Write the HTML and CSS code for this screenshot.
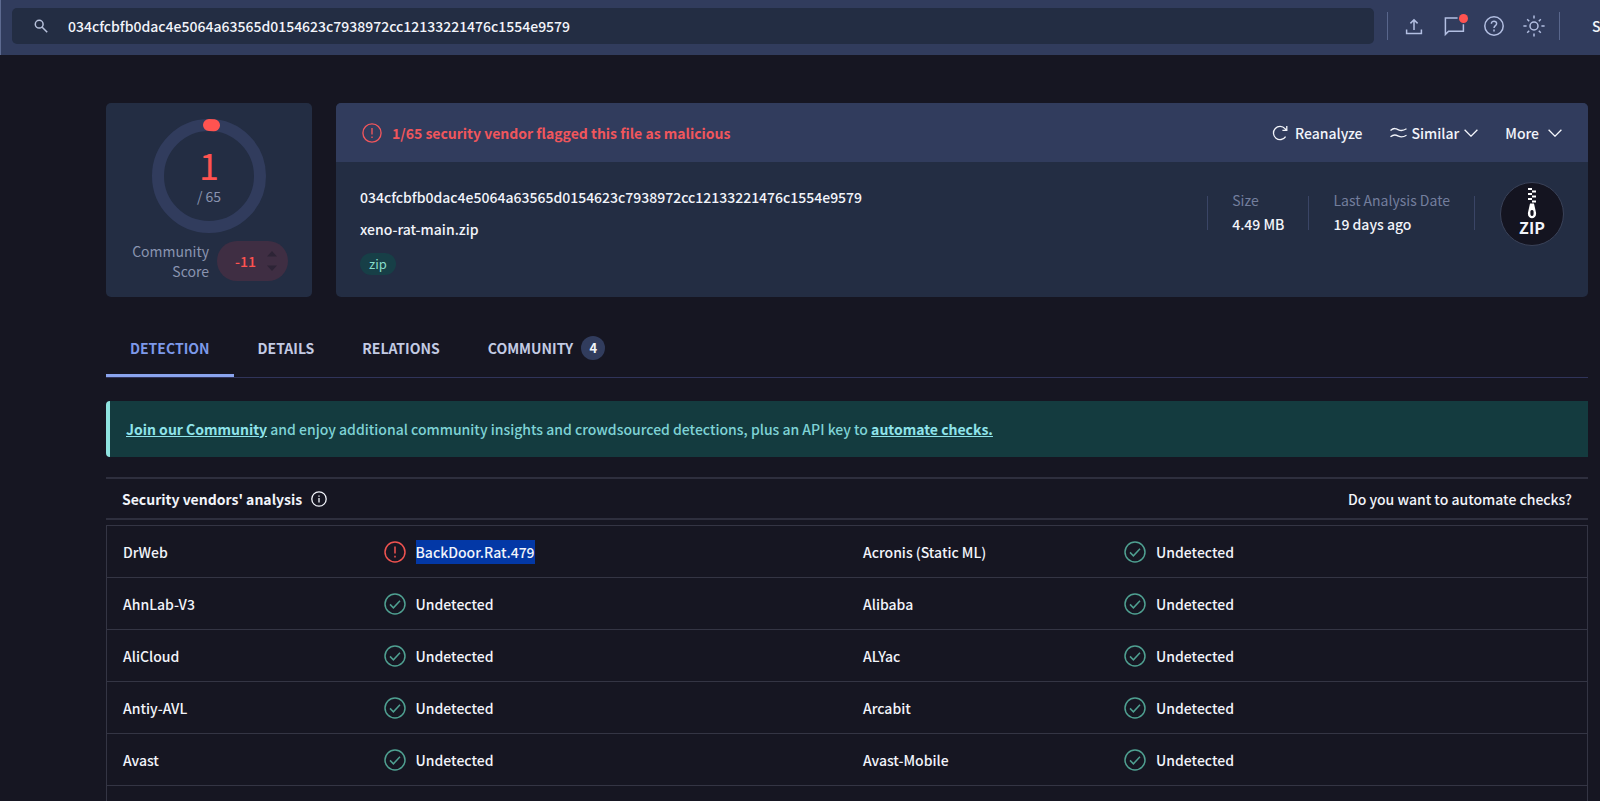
FILE: index.html
```html
<!DOCTYPE html>
<html lang="en">
<head>
  <meta charset="UTF-8">
  <title>xeno-rat-main.zip</title>
  <link rel="stylesheet" href="styles.css">
</head>
<body>

  <!-- icons used more than once -->
  <svg class="sprite" aria-hidden="true">
    <symbol id="icon-check" viewBox="0 0 22 22">
      <circle cx="11" cy="11" r="10"/>
      <path d="M6 11.4l3.4 3.4 6.6-7"/>
    </symbol>
    <symbol id="icon-alert" viewBox="0 0 22 22">
      <circle cx="11" cy="11" r="10"/>
      <path d="M11 5.6v7M11 14.8v1.6"/>
    </symbol>
    <symbol id="icon-chevron" viewBox="0 0 14 8">
      <path d="M.6 .8L7 7.2 13.4 .8"/>
    </symbol>
  </svg>

  <header class="topbar">
    <form class="search">
      <label for="query" aria-label="Search">
        <svg class="icon search-icon" viewBox="0 0 14 14"><circle cx="5.2" cy="5.2" r="3.9"/><path d="M8.2 8.2l5 5"/></svg>
      </label>
      <input type="text" id="query" value="034cfcbfb0dac4e5064a63565d0154623c7938972cc12133221476c1554e9579">
    </form>
    <div class="tools">
      <button type="button" aria-label="Upload">
        <svg class="icon" viewBox="0 0 24 24"><path d="M4.6 15.6v4h14.8v-4M12 16V6M8.4 9.4L12 5.8l3.6 3.6"/></svg>
      </button>
      <button type="button" class="chat" aria-label="Notifications">
        <svg class="icon" viewBox="0 0 24 24"><path d="M15.6 4H3.4v16.4l3.2-3.2h14.8v-7"/></svg>
        <span class="dot"></span>
      </button>
      <button type="button" aria-label="Help">
        <svg class="icon" viewBox="0 0 24 24"><circle cx="12" cy="12" r="9.2"/><path d="M9.4 9.8c0-3.6 5.4-3.4 5.2-.1-.1 1.9-2.6 2-2.6 4.2M12 15.6v1.8"/></svg>
      </button>
      <button type="button" aria-label="Theme">
        <svg class="icon" viewBox="0 0 24 24"><circle cx="12" cy="12" r="4"/><path d="M12 1.4v3.2M12 19.4v3.2M1.4 12h3.2M19.4 12h3.2M5.2 5.2l2 2M16.8 16.8l2 2M5.2 18.8l2-2M16.8 7.2l2-2"/></svg>
      </button>
    </div>
    <a class="signin" href="#">Sign in</a>
  </header>

  <main>
    <section class="summary">
      <div class="score-card">
        <div class="ring">
          <svg class="ring-chart" viewBox="0 0 114 114">
            <circle class="ring-track" cx="57" cy="57" r="51"/>
            <path class="ring-value" d="M57 6a51 51 0 0 1 5 .3"/>
          </svg>
          <div class="ring-text">
            <span class="positives">1</span>
            <span class="total">/ 65</span>
          </div>
        </div>
        <div class="community">
          <span class="community-label">Community Score</span>
          <div class="votes">
            <span>-11</span>
            <svg class="vote-arrows" viewBox="0 0 10 20"><path d="M0 5.5L5 0l5 5.5zM0 14.5L5 20l5-5.5z"/></svg>
          </div>
        </div>
      </div>

      <div class="file-card">
        <div class="file-head">
          <div class="verdict">
            <svg class="icon alert"><use href="#icon-alert"/></svg>
            <span>1/65 security vendor flagged this file as malicious</span>
          </div>
          <div class="actions">
            <button type="button">
              <svg class="icon reload" viewBox="0 0 16 16"><path d="M13.6 11.6A6.6 6.6 0 1 1 13 3.6l1.2 1.6M14.8 1v4.4h-4.4"/></svg>
              Reanalyze
            </button>
            <button type="button" class="similar">
              <svg class="icon waves" viewBox="0 0 17 12"><path d="M.5 3.4C4 .5 6 1.5 8.5 2.8S13 4 16.5 1.8M.5 9.8C4 7 6 8 8.5 9.2s4.5 1.2 8-1"/></svg>
              Similar
              <svg class="icon chevron"><use href="#icon-chevron"/></svg>
            </button>
            <button type="button" class="more">
              More
              <svg class="icon chevron"><use href="#icon-chevron"/></svg>
            </button>
          </div>
        </div>
        <div class="file-body">
          <div class="file-names">
            <div>034cfcbfb0dac4e5064a63565d0154623c7938972cc12133221476c1554e9579</div>
            <div>xeno-rat-main.zip</div>
            <a class="tag" href="#">zip</a>
          </div>
          <div class="facts">
            <div class="fact">
              <span class="muted">Size</span>
              <span>4.49 MB</span>
            </div>
            <div class="fact">
              <span class="muted">Last Analysis Date</span>
              <span>19 days ago</span>
            </div>
            <div class="file-type">
              <svg class="zipper" viewBox="0 0 10 31">
                <path d="M1 0h4v2H1zM5 2.5h4v2H5zM1 5h4v2H1zM5 7.5h4v2H5zM1 10h4v2H1zM5 12.5h4v2H5z"/>
                <path fill-rule="evenodd" d="M3 15.5h4l2 9c1.2 7.5-9.2 7.5-8 0zM5 22c-1.6 0-1.6 1-1.6 3s.2 3 1.6 3 1.6-1 1.6-3 0-3-1.6-3z"/>
              </svg>
              <span>ZIP</span>
            </div>
          </div>
        </div>
      </div>
    </section>

    <nav class="tabs">
      <a class="active" href="#">DETECTION</a>
      <a href="#">DETAILS</a>
      <a href="#">RELATIONS</a>
      <a href="#">COMMUNITY <span class="badge">4</span></a>
    </nav>

    <p class="banner"><a href="#">Join our Community</a> and enjoy additional community insights and crowdsourced detections, plus an API key to <a href="#">automate checks.</a></p>

    <div class="section-head">
      <h2>Security vendors' analysis
        <svg class="icon info" viewBox="0 0 16 16"><circle cx="8" cy="8" r="7.2"/><path d="M8 7v4.6M8 4.4v1.4"/></svg>
      </h2>
      <a href="#">Do you want to automate checks?</a>
    </div>

    <table class="vendors">
      <colgroup>
        <col class="name"><col><col class="name"><col>
      </colgroup>
      <tbody>
        <tr>
          <td>DrWeb</td>
          <td><div class="result bad"><svg class="icon"><use href="#icon-alert"/></svg><mark>BackDoor.Rat.479</mark></div></td>
          <td>Acronis (Static ML)</td>
          <td><div class="result"><svg class="icon"><use href="#icon-check"/></svg>Undetected</div></td>
        </tr>
        <tr>
          <td>AhnLab-V3</td>
          <td><div class="result"><svg class="icon"><use href="#icon-check"/></svg>Undetected</div></td>
          <td>Alibaba</td>
          <td><div class="result"><svg class="icon"><use href="#icon-check"/></svg>Undetected</div></td>
        </tr>
        <tr>
          <td>AliCloud</td>
          <td><div class="result"><svg class="icon"><use href="#icon-check"/></svg>Undetected</div></td>
          <td>ALYac</td>
          <td><div class="result"><svg class="icon"><use href="#icon-check"/></svg>Undetected</div></td>
        </tr>
        <tr>
          <td>Antiy-AVL</td>
          <td><div class="result"><svg class="icon"><use href="#icon-check"/></svg>Undetected</div></td>
          <td>Arcabit</td>
          <td><div class="result"><svg class="icon"><use href="#icon-check"/></svg>Undetected</div></td>
        </tr>
        <tr>
          <td>Avast</td>
          <td><div class="result"><svg class="icon"><use href="#icon-check"/></svg>Undetected</div></td>
          <td>Avast-Mobile</td>
          <td><div class="result"><svg class="icon"><use href="#icon-check"/></svg>Undetected</div></td>
        </tr>
        <tr>
          <td></td>
          <td></td>
          <td></td>
          <td></td>
        </tr>
      </tbody>
    </table>
  </main>

</body>
</html>
```
FILE: styles.css
```css
* {
  box-sizing: border-box;
}

body {
  margin: 0;
  background: #161622;
  color: #f2f4fa;
  font-family: "Noto Sans CJK SC", "Noto Sans", sans-serif;
  font-size: 14px;
  font-weight: 500;
  line-height: 24px;
  overflow-x: hidden;
}

a {
  color: inherit;
  text-decoration: none;
}

button {
  display: flex;
  align-items: center;
  padding: 0;
  border: none;
  background: none;
  color: inherit;
  font: inherit;
  cursor: pointer;
}

.sprite {
  display: none;
}

.icon {
  flex: none;
  fill: none;
  stroke: currentColor;
  stroke-width: 1.5;
}

/* top bar */
.topbar {
  display: flex;
  align-items: center;
  height: 55px;
  padding: 0 0 3px 12px;
  background: #313c5d;
  box-shadow: inset 1px 0 #5d6a90;
  overflow: hidden;
}

.search {
  display: flex;
  align-items: center;
  flex: 1;
  height: 36px;
  padding-left: 22px;
  gap: 20px;
  border-radius: 5px;
  background: #232d43;
}

.search label {
  display: flex;
  color: #b8c2dc;
}

.search-icon {
  width: 14px;
  height: 14px;
}

.search input {
  flex: 1;
  padding: 0;
  border: none;
  outline: none;
  background: none;
  color: inherit;
  font: inherit;
}

.tools {
  display: flex;
  gap: 16px;
  margin-left: 13px;
  padding: 2px 13px 2px 14px;
  border-left: 1px solid #59668c;
  border-right: 1px solid #59668c;
  color: #b3bfe2;
}

.tools .icon {
  width: 24px;
  height: 24px;
}

.chat {
  position: relative;
}

.dot {
  position: absolute;
  top: 0;
  right: -2px;
  width: 9px;
  height: 9px;
  border-radius: 50%;
  background: #ff5350;
}

.signin {
  flex: 0 0 40px;
  min-width: 0;
  padding-left: 32px;
  white-space: nowrap;
}

main {
  padding: 48px 12px 0 106px;
}

/* summary */
.summary {
  display: flex;
  gap: 24px;
}

.score-card {
  display: flex;
  flex-direction: column;
  align-items: center;
  flex: 0 0 206px;
  height: 194px;
  padding-top: 16px;
  border-radius: 5px;
  background: #232d43;
}

.ring {
  display: grid;
  place-items: center;
  width: 114px;
  height: 114px;
}

.ring-chart,
.ring-text {
  grid-area: 1 / 1;
}

.ring-chart {
  width: 114px;
  height: 114px;
  fill: none;
  stroke-width: 12;
}

.ring-track {
  stroke: #313c5d;
}

.ring-value {
  stroke: #ff5350;
  stroke-linecap: round;
}

.ring-text {
  display: flex;
  flex-direction: column;
  align-items: center;
  font-weight: 400;
}

.positives {
  color: #ff5350;
  font-size: 36px;
  line-height: 40px;
}

.total {
  color: #8a94b0;
}

.community {
  display: flex;
  align-items: center;
  gap: 8px;
  align-self: stretch;
  padding: 8px 24px;
}

.community-label {
  flex: 1;
  color: #8a94b0;
  font-weight: 400;
  line-height: 20px;
  text-align: right;
}

.votes {
  display: flex;
  align-items: center;
  justify-content: space-between;
  width: 71px;
  height: 40px;
  padding: 0 11px 0 18px;
  border-radius: 20px;
  background: #3f2e43;
  color: #ff5350;
}

.vote-arrows {
  width: 10px;
  height: 20px;
  fill: #2d2436;
}

.file-card {
  flex: 1;
  border-radius: 5px;
  background: #232d43;
  overflow: hidden;
}

.file-head {
  display: flex;
  align-items: center;
  justify-content: space-between;
  height: 59px;
  padding: 0 26px;
  background: #313c5d;
}

.verdict {
  display: flex;
  align-items: center;
  gap: 10px;
  color: #f0565c;
  font-weight: 700;
}

.alert {
  width: 20px;
  height: 20px;
}

.actions {
  display: flex;
  gap: 27px;
}

.actions button {
  gap: 7px;
}

.actions .similar {
  gap: 5px;
}

.actions .more {
  gap: 9px;
}

.actions .icon {
  stroke-width: 1.3;
}

.reload {
  width: 16px;
  height: 16px;
}

.waves {
  width: 17px;
  height: 12px;
}

.chevron {
  width: 14px;
  height: 8px;
}

.file-body {
  display: flex;
  justify-content: space-between;
  padding: 20px 24px 0;
}

.file-names {
  display: flex;
  flex-direction: column;
  align-items: flex-start;
  gap: 8px;
  padding-top: 3px;
}

.tag {
  margin-top: 4px;
  padding: 0 9px;
  border-radius: 11px;
  background: #173f47;
  color: #86dcc9;
  font-size: 13px;
  font-weight: 400;
  line-height: 22px;
}

.facts {
  display: flex;
  align-items: flex-start;
}

.fact {
  display: flex;
  flex-direction: column;
  height: 48px;
  margin-top: 6px;
  padding: 0 24px;
  border-left: 1px solid transparent;
  border-image: linear-gradient(transparent 9px, #3a4566 9px, #3a4566 41px, transparent 41px) 1;
  white-space: nowrap;
}

.fact:nth-child(2) {
  border-right: 1px solid transparent;
}

.muted {
  color: #737e9d;
  font-weight: 400;
}

.file-type {
  display: flex;
  flex-direction: column;
  align-items: center;
  width: 64px;
  height: 64px;
  margin-left: 25px;
  padding-top: 5px;
  border: 1px solid #3a4258;
  border-radius: 50%;
  background: #141420;
  font-size: 16px;
  font-weight: 700;
  line-height: 16px;
}

.zipper {
  width: 10px;
  height: 31px;
  fill: #fff;
}

/* tabs */
.tabs {
  display: flex;
  height: 57px;
  margin-top: 24px;
  border-bottom: 1px solid #30345a;
  color: #c3cbe4;
  font-weight: 700;
}

.tabs a {
  display: flex;
  align-items: center;
  gap: 8px;
  padding: 0 24px;
  border-bottom: 3px solid transparent;
}

.tabs .active {
  border-bottom-color: #8aa4ee;
  color: #7d99ea;
}

.badge {
  width: 24px;
  border-radius: 50%;
  background: #313c5d;
  color: #f2f4fa;
  font-size: 13px;
  text-align: center;
}

.banner {
  margin: 23px 0 20px;
  padding: 16px;
  border-left: 4px solid #8fe3e0;
  border-radius: 4px 0 0 4px;
  background: #143b3f;
  color: #7fd3d6;
}

.banner a {
  color: #8fe3ea;
  font-weight: 700;
  text-decoration: underline;
}

/* vendor results */
.section-head {
  display: flex;
  align-items: center;
  justify-content: space-between;
  height: 43px;
  margin-bottom: 5px;
  padding: 0 16px;
  border: solid #2e2f3e;
  border-width: 2px 0;
}

.section-head h2 {
  display: flex;
  align-items: center;
  gap: 9px;
  margin: 0;
  font-size: 14px;
  font-weight: 700;
}

.info {
  width: 16px;
  height: 16px;
  stroke-width: 1.3;
}

.vendors {
  width: 100%;
  border: 1px solid #343544;
  border-collapse: collapse;
  table-layout: fixed;
}

.vendors .name {
  width: 261px;
}

.vendors td {
  height: 52px;
  padding: 0 16px;
  border-bottom: 1px solid #343544;
}

.result {
  display: flex;
  align-items: center;
  gap: 10px;
}

.result .icon {
  width: 22px;
  height: 22px;
  color: #4fa091;
}

.bad .icon {
  color: #ef5350;
}

mark {
  background: #0338a6;
  color: inherit;
}
```
